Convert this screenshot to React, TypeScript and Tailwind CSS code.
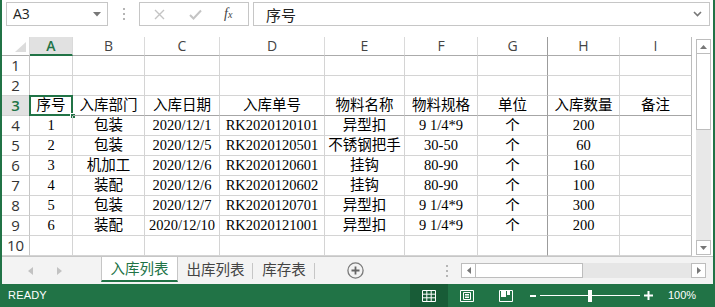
import React from "react";

const COLS = ["A", "B", "C", "D", "E", "F", "G", "H", "I"];
const W = [
  "w-[43px]",
  "w-[72px]",
  "w-[75px]",
  "w-[105px]",
  "w-[80px]",
  "w-[73px]",
  "w-[70px]",
  "w-[72px]",
  "w-[72px]",
];

const ROWS: string[][] = [
  [],
  [],
  ["序号", "入库部门", "入库日期", "入库单号", "物料名称", "物料规格", "单位", "入库数量", "备注"],
  ["1", "包装", "2020/12/1", "RK2020120101", "异型扣", "9 1/4*9", "个", "200", ""],
  ["2", "包装", "2020/12/5", "RK2020120501", "不锈钢把手", "30-50", "个", "60", ""],
  ["3", "机加工", "2020/12/6", "RK2020120601", "挂钩", "80-90", "个", "160", ""],
  ["4", "装配", "2020/12/6", "RK2020120602", "挂钩", "80-90", "个", "100", ""],
  ["5", "包装", "2020/12/7", "RK2020120701", "异型扣", "9 1/4*9", "个", "300", ""],
  ["6", "装配", "2020/12/10", "RK2020121001", "异型扣", "9 1/4*9", "个", "200", ""],
  [],
];

function Dots() {
  return (
    <div className="flex flex-col gap-[3px]">
      <span className="w-[2px] h-[2px] bg-[#b5b5b5]" />
      <span className="w-[2px] h-[2px] bg-[#b5b5b5]" />
      <span className="w-[2px] h-[2px] bg-[#b5b5b5]" />
    </div>
  );
}

function FormulaBar() {
  return (
    <div className="h-[37px] flex items-start pt-[2px] font-['Open_Sans',sans-serif]">
      {/* name box */}
      <div className="ml-[4px] w-[102px] h-[24px] border border-[#c6c6c6] flex items-center justify-between pl-[6px] pr-[6px]">
        <span className="text-[14px] text-[#222] leading-none">A3</span>
        <svg width="8" height="5" viewBox="0 0 8 5">
          <path d="M0 0 H8 L4 4.5 Z" fill="#777" />
        </svg>
      </div>
      <div className="w-[31px] h-[24px] flex items-center justify-center">
        <Dots />
      </div>
      {/* cancel / enter / fx */}
      <div className="w-[110px] h-[24px] border border-[#c6c6c6] flex items-center">
        <svg className="ml-[14px]" width="11" height="11" viewBox="0 0 11 11">
          <path d="M1 1 L10 10 M10 1 L1 10" stroke="#c4c4c4" strokeWidth="1.4" />
        </svg>
        <svg className="ml-[24px]" width="13" height="11" viewBox="0 0 13 11">
          <path d="M1 6 L4.5 9.5 L12 1.5" stroke="#c4c4c4" strokeWidth="2" fill="none" />
        </svg>
        <span className="ml-[22px] font-['Liberation_Serif',serif] italic text-[14px] text-[#444] leading-none">
          f<span className="text-[10px]">x</span>
        </span>
      </div>
      {/* formula input */}
      <div className="ml-[4px] w-[457px] h-[24px] border border-[#c6c6c6] flex items-center justify-between pl-[12px] pr-[7px]">
        <span className="font-['Noto_Sans_CJK_SC',sans-serif] text-[15px] text-[#222] leading-none">序号</span>
        <svg width="9" height="6" viewBox="0 0 9 6">
          <path d="M1 1 L4.5 4.5 L8 1" stroke="#777" strokeWidth="1.6" fill="none" />
        </svg>
      </div>
    </div>
  );
}

function HeaderRow() {
  return (
    <div className="flex h-[19px] font-['Open_Sans',sans-serif] text-[14px] text-[#444]">
      <div className="w-[28px] h-full border-r border-b border-r-[#dadada] border-b-[#ababab] relative">
        <svg className="absolute right-[3px] bottom-[3px]" width="11" height="10" viewBox="0 0 11 10">
          <path d="M11 0 V10 H0 Z" fill="#dcdcdc" />
        </svg>
      </div>
      {COLS.map((c, i) => {
        const sel = i === 0;
        return (
          <div
            key={c}
            className={[
              W[i],
              "h-full flex items-center justify-center border-r leading-none",
              i === 6 ? "border-r-[#9c9c9c]" : i === 8 ? "border-r-[#bcbcbc]" : "border-r-[#dadada]",
              sel
                ? "bg-[#e1e1e1] border-b-2 border-b-[#217346] text-[#217346] font-semibold"
                : "border-b border-b-[#ababab]",
            ].join(" ")}
          >
            {c}
          </div>
        );
      })}
    </div>
  );
}

function DataRow({ n, cells }: { n: number; cells: string[] }) {
  const hdrRow = n === 3;
  return (
    <div className="flex h-[20px]">
      <div
        className={[
          "w-[28px] h-full flex items-center justify-center border-r border-b border-b-[#d4d4d4] font-['Open_Sans',sans-serif] text-[15px] leading-none",
          hdrRow
            ? "bg-[#e1e1e1] text-[#217346] font-semibold border-r-[#217346]"
            : "text-[#333] border-r-[#c6c6c6]",
        ].join(" ")}
      >
        {n}
      </div>
      {COLS.map((c, i) => (
        <div
          key={c}
          className={[
            W[i],
            "h-full relative flex items-center justify-center border-r border-b whitespace-nowrap font-['Liberation_Serif','Noto_Sans_CJK_SC',serif] text-[14.5px] text-black leading-none",
            i === 6 ? "border-r-[#9c9c9c]" : i === 8 ? "border-r-[#bcbcbc]" : "border-r-[#d4d4d4]",
            hdrRow ? "border-b-[#a6a6a6]" : "border-b-[#d4d4d4]",
          ].join(" ")}
        >
          {cells[i] ?? ""}
          {hdrRow && i === 0 && (
            <>
              <div className="absolute inset-[-1px] border-2 border-[#217346] pointer-events-none" />
              <div className="absolute right-[-4px] bottom-[-4px] w-[6px] h-[6px] bg-[#217346] border border-white" />
            </>
          )}
        </div>
      ))}
    </div>
  );
}

function VScroll() {
  return (
    <div className="w-[21px] flex flex-col items-end pr-[2px] pt-[2px] pb-[1px]">
      <div className="w-[15px] flex-1 flex flex-col bg-[#e8e8e8]">
        <div className="h-[15px] bg-white border border-[#bdbdbd] flex items-center justify-center">
          <svg width="7" height="4" viewBox="0 0 7 4">
            <path d="M0 4 L3.5 0 L7 4 Z" fill="#777" />
          </svg>
        </div>
        <div className="h-[76px] bg-white border border-[#bdbdbd] border-t-0" />
        <div className="flex-1" />
        <div className="h-[15px] bg-white border border-[#bdbdbd] flex items-center justify-center">
          <svg width="7" height="4" viewBox="0 0 7 4">
            <path d="M0 0 L3.5 4 L7 0 Z" fill="#777" />
          </svg>
        </div>
      </div>
    </div>
  );
}

function TabBar() {
  return (
    <div className="h-[28px] border-t border-[#c6c6c6] bg-[#f3f3f3] flex items-start font-['Noto_Sans_CJK_SC',sans-serif] text-[14.5px] text-[#444]">
      <div className="w-[99px] h-full flex items-center">
        <svg className="ml-[26px]" width="5" height="8" viewBox="0 0 5 8">
          <path d="M5 0 V8 L0 4 Z" fill="#c2c2c2" />
        </svg>
        <svg className="ml-[24px]" width="5" height="8" viewBox="0 0 5 8">
          <path d="M0 0 V8 L5 4 Z" fill="#c2c2c2" />
        </svg>
      </div>
      <div className="w-[77px] h-[25px] bg-white border-x border-[#c6c6c6] border-b-2 border-b-[#217346] flex items-center justify-center text-[#217346] leading-none">
        入库列表
      </div>
      <div className="w-[75px] h-[25px] flex items-center justify-center leading-none relative">
        出库列表
        <span className="absolute right-0 top-[6px] h-[16px] w-px bg-[#c6c6c6]" />
      </div>
      <div className="w-[62px] h-[25px] flex items-center justify-center leading-none relative">
        库存表
        <span className="absolute right-0 top-[6px] h-[16px] w-px bg-[#c6c6c6]" />
      </div>
      <div className="w-[82px] h-full flex items-center pl-[32px]">
        <svg width="17" height="17" viewBox="0 0 17 17">
          <circle cx="8.5" cy="8.5" r="7.6" stroke="#7a7a7a" strokeWidth="1.3" fill="none" />
          <path d="M8.5 4.5 V12.5 M4.5 8.5 H12.5" stroke="#666" strokeWidth="1.8" />
        </svg>
      </div>
      <div className="h-full flex items-center ml-[49px]">
        <Dots />
      </div>
      <div className="ml-[13px] mt-[6px] w-[245px] h-[15px] flex bg-[#e6e6e6]">
        <div className="w-[15px] h-full bg-white border border-[#bdbdbd] flex items-center justify-center">
          <svg width="4" height="7" viewBox="0 0 4 7">
            <path d="M4 0 V7 L0 3.5 Z" fill="#777" />
          </svg>
        </div>
        <div className="w-[107px] h-full bg-white border border-[#bdbdbd] border-l-0" />
        <div className="flex-1" />
        <div className="w-[15px] h-full bg-white border border-[#bdbdbd] flex items-center justify-center">
          <svg width="4" height="7" viewBox="0 0 4 7">
            <path d="M0 0 V7 L4 3.5 Z" fill="#777" />
          </svg>
        </div>
      </div>
    </div>
  );
}

function StatusBar() {
  return (
    <div className="h-[23px] bg-[#217346] flex items-center text-white font-['Liberation_Sans',sans-serif] text-[11px]">
      <span className="ml-[8px] tracking-[0.2px]">READY</span>
      <div className="ml-[363px] w-[38px] h-full bg-[#185c37] flex items-center justify-center">
        <svg width="14" height="12" viewBox="0 0 14 12">
          <path d="M0.5 0.5 H13.5 V11.5 H0.5 Z M0.5 4.2 H13.5 M0.5 7.8 H13.5 M4.8 0.5 V11.5 M9.2 0.5 V11.5" stroke="white" strokeWidth="1" fill="none" />
        </svg>
      </div>
      <div className="ml-[12px] flex items-center">
        <svg width="14" height="12" viewBox="0 0 14 12">
          <path d="M0.5 0.5 H13.5 V11.5 H0.5 Z" stroke="white" strokeWidth="1" fill="none" />
          <path d="M3.5 2.5 H10.5 V9.5 H3.5 Z M5 4.5 H9 M5 6 H9 M5 7.5 H9" stroke="white" strokeWidth="1" fill="none" />
        </svg>
      </div>
      <div className="ml-[25px] flex items-center">
        <svg width="14" height="12" viewBox="0 0 14 12">
          <path d="M0.5 0.5 H13.5 V11.5 H0.5 Z" stroke="white" strokeWidth="1" fill="none" />
          <path d="M2 1 H7 V7 H2 Z M8 1 H11 V5 H8 Z" fill="white" />
        </svg>
      </div>
      <div className="ml-[17px] flex items-center">
        <span className="w-[6px] h-[2px] bg-white" />
        <div className="ml-[4px] w-[100px] h-[12px] relative flex items-center">
          <span className="w-full h-px bg-white" />
          <span className="absolute left-[48px] top-0 w-[4px] h-[12px] bg-white" />
        </div>
        <svg className="ml-[4px]" width="9" height="9" viewBox="0 0 9 9">
          <path d="M4.5 0 V9 M0 4.5 H9" stroke="white" strokeWidth="2" />
        </svg>
      </div>
      <span className="ml-[15px]">100%</span>
    </div>
  );
}

export default function App() {
  return (
    <div className="w-[715px] h-[307px] overflow-hidden bg-white flex flex-col">
      <div className="flex-1 flex flex-col border-x-2 border-[#217346]">
        <FormulaBar />
        <div className="flex">
          <div className="w-[690px] flex flex-col">
            <HeaderRow />
            {ROWS.map((cells, i) => (
              <DataRow key={i} n={i + 1} cells={cells} />
            ))}
          </div>
          <VScroll />
        </div>
        <TabBar />
      </div>
      <StatusBar />
    </div>
  );
}
